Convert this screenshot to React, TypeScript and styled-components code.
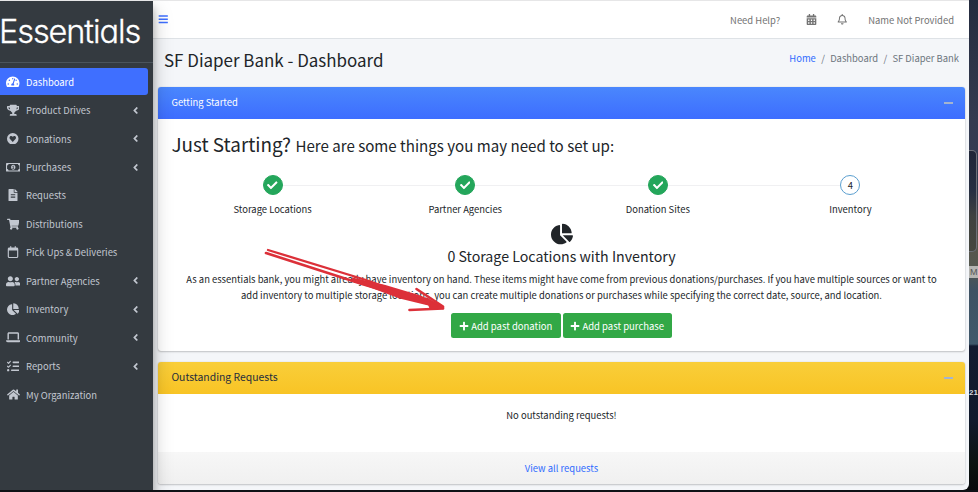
import React from "react";
import styled, { createGlobalStyle } from "styled-components";
import {
  FaTachometerAlt, FaTrophy, FaFileAlt, FaShoppingCart, FaUserFriends, FaRegMoneyBillAlt,
  FaChartPie, FaHome, FaAngleLeft, FaCalendarAlt, FaRegBell, FaPlus, FaBars, FaCheck,
} from "react-icons/fa";
import { FaListCheck, FaLaptop, FaRegCalendar } from "react-icons/fa6";

const GlobalStyle = createGlobalStyle`
  * { box-sizing: border-box; }
  body { margin: 0; overflow: hidden; background: #0d1015; }
  body, button { font-family: "Noto Sans CJK SC", "Open Sans", sans-serif; font-size: 9.43px; line-height: 16px; color: #212529; }
  h1, h2, h3, p { margin: 0; font-weight: 400; }
  a { color: #2f6bff; text-decoration: none; }
  svg { display: block; flex: none; }
`;

const Desktop = styled.div`
  position: relative;
  display: grid;
  grid-template-columns: 969px 9px;
  width: 978px;
  height: 492px;
  overflow: hidden;
  background: #0f1116;
`;

const Window = styled.div`
  display: grid;
  grid-template-columns: 153px 1fr;
  height: 490px;
  border-top: 1px solid #e6e6e7;
  border-bottom-right-radius: 6px;
  overflow: hidden;
  background: #f4f6f9;
  z-index: 1;
`;

const Sidebar = styled.aside`
  background: #343a40;
  box-shadow: 0 9px 18px rgba(0, 0, 0, 0.25), 0 6px 7px rgba(0, 0, 0, 0.22);
  z-index: 2;
`;

const Brand = styled.div`
  height: 62px;
  padding-top: 11px;
  border-bottom: 1px solid #4b545c;
  color: #fff;
  font-family: Inter, sans-serif;
  font-feature-settings: "cv11";
  font-size: 32.5px;
  line-height: 40px;
  font-weight: 300;
  letter-spacing: -1.1px;
  -webkit-text-stroke: 0.3px #fff;
  white-space: nowrap;
  margin-left: -1px;
  padding-left: 0;
`;

const Nav = styled.nav`
  display: flex;
  flex-direction: column;
  gap: 1.85px;
  padding: 5.4px 5px 0 0;
`;

const NavItem = styled.a<{ $active?: boolean }>`
  display: grid;
  grid-template-columns: 15px 1fr 10px;
  column-gap: 5.5px;
  align-items: center;
  height: 26.6px;
  padding: 0 8px 0 5.5px;
  border-radius: 0 3px 3px 0;
  color: ${(p) => (p.$active ? "#fff" : "#c2c7d0")};
  background: ${(p) => (p.$active ? "#3f6fff" : "transparent")};
  white-space: nowrap;
  & > svg { justify-self: center; }
`;

const Main = styled.main`
  display: flex;
  flex-direction: column;
  min-width: 0;
`;

const TopBar = styled.header`
  display: flex;
  align-items: center;
  height: 38px;
  padding: 0 15px 0 5px;
  background: #fff;
  border-bottom: 1px solid #dee2e6;
  color: #747474;
  & > svg:first-child { color: #3f6fff; margin-right: auto; }
`;

const HelpLink = styled.span`margin-right: 26px;`;
const UserName = styled.span`margin-left: 20.5px;`;
const BellSlot = styled.span`margin-left: 20px;`;

const TitleRow = styled.div`
  display: flex;
  justify-content: space-between;
  height: 47.5px;
  padding: 9px 10px 0 11px;
`;

const Title = styled.h1`
  font-size: 16.95px;
  line-height: 24px;
`;

const Crumbs = styled.div`
  display: flex;
  gap: 5.3px;
  padding-top: 2px;
  color: #6c757d;
`;

const Card = styled.section<{ $height: number }>`
  display: flex;
  flex-direction: column;
  height: ${(p) => p.$height}px;
  margin: 0 4px 11px 5px;
  border-radius: 3px;
  background: #fff;
  box-shadow: 0 0 1px rgba(0, 0, 0, 0.25), 0 1px 2px rgba(0, 0, 0, 0.2);
  overflow: hidden;
  flex: none;
`;

const CardHeader = styled.div<{ $tone: "blue" | "yellow" }>`
  display: flex;
  align-items: center;
  justify-content: space-between;
  height: 32px;
  padding: 0 12px 1px 13.4px;
  color: ${(p) => (p.$tone === "blue" ? "#fff" : "#1f2d3d")};
  font-size: ${(p) => (p.$tone === "blue" ? "9.43px" : "10.4px")};
  background: ${(p) =>
    p.$tone === "blue"
      ? "linear-gradient(#4a87fd, #3d6dff)"
      : "linear-gradient(#f9ce3a, #f8c425)"};
`;

const Collapse = styled.span`
  width: 9px;
  height: 2px;
  margin-top: 1px;
  background: #a4b4cf;
`;

const CardBody = styled.div`
  flex: 1;
  display: flex;
  flex-direction: column;
  align-items: center;
`;

const Lead = styled.h2`
  align-self: stretch;
  display: flex;
  align-items: baseline;
  gap: 4.5px;
  height: 44.5px;
  padding: 11px 0 0 13.5px;
  font-size: 15.1px;
  line-height: 28px;
  white-space: nowrap;
`;

const LeadStrong = styled.span`font-size: 18.9px;`;

const Steps = styled.div`
  display: grid;
  grid-template-columns: repeat(4, 192.6px);
  height: 60px;
  padding-top: 12px;
`;

const Step = styled.div`
  display: flex;
  flex-direction: column;
  align-items: center;
  gap: 6px;
`;

const StepTrack = styled.div<{ $first?: boolean; $last?: boolean }>`
  display: grid;
  grid-template-columns: 1fr 20px 1fr;
  align-items: center;
  width: 100%;
  &::before, &::after { content: ""; height: 1px; background: #f0f0f2; }
  &::before { visibility: ${(p) => (p.$first ? "hidden" : "visible")}; }
  &::after { visibility: ${(p) => (p.$last ? "hidden" : "visible")}; grid-column: 3; }
`;

const StepDot = styled.span<{ $done: boolean }>`
  grid-column: 2;
  display: flex;
  align-items: center;
  justify-content: center;
  width: 20px;
  height: 20px;
  border-radius: 50%;
  color: ${(p) => (p.$done ? "#fff" : "#212529")};
  border: 1px solid ${(p) => (p.$done ? "#24a65b" : "#5b9fd0")};
  background: ${(p) => (p.$done ? "#24a65b" : "#fff")};
`;

const Heading = styled.h3`
  font-size: 14.2px;
  line-height: 22px;
`;

const Copy = styled.p`
  margin-top: 4px;
  text-align: center;
  white-space: nowrap;
`;

const Buttons = styled.div`
  display: flex;
  gap: 2px;
  margin-top: 10px;
`;

const AddButton = styled.button`
  display: flex;
  align-items: center;
  justify-content: center;
  gap: 2px;
  width: 109.5px;
  height: 25px;
  padding: 0;
  border: 0;
  border-radius: 2.5px;
  color: #fff;
  background: #32a846;
  font-size: 9.5px;
  white-space: nowrap;
`;

const Empty = styled.p`
  height: 58px;
  padding-top: 13px;
  text-align: center;
`;

const CardFooter = styled.div`
  height: 32px;
  padding-top: 8px;
  text-align: center;
  background: linear-gradient(#f7f7f7, #f0f0f0);
`;

const Backdrop = styled.div`
  display: flex;
  flex-direction: column;
  height: 490px;
  margin-left: -6px;
  padding-left: 6px;
  background: linear-gradient(#242b3e 0, #343b50 120px, #343c52 150px, #30384c 190px, #59564c 240px, #55584f 265px, #3f5263 290px, #40596b 344px, #131b30 346px, #111a2c 420px, #0b1310 465px, #080a0c 490px);
`;

const WidgetPane = styled.div`
  height: 102px;
  width: 8px;
  margin-top: 150px;
  border: 1px solid #6d7078;
  border-left: 0;
  border-radius: 0 5px 5px 0;
  background: linear-gradient(#202638, #272f42 40%, #3f4240 65%, #45473f);
`;

const MonthTag = styled.div`
  height: 12px;
  margin-top: 14px;
  padding-left: 1px;
  background: #b5b5b2;
  color: #555;
  font: 9px/12px "Liberation Sans", sans-serif;
`;

const DayTag = styled.div`
  margin-top: 109px;
  color: #d5d8de;
  font: bold 8px/12px "Liberation Sans", sans-serif;
  white-space: nowrap;
`;

const Arrow = styled.svg`
  position: absolute;
  left: 0;
  top: 0;
  z-index: 3;
  pointer-events: none;
`;

const HeartCircle = ({ size }: { size: number }) => (
  <svg width={size} height={size} viewBox="0 0 24 24" fill="currentColor">
    <path
      fillRule="evenodd"
      d="M12 0a12 12 0 1 0 0 24a12 12 0 0 0 0-24ZM12 18.6L6.3 12.7C4.7 11 4.9 8.3 6.6 7C8.3 5.7 10.6 6.2 12 8C13.4 6.2 15.7 5.7 17.4 7C19.1 8.3 19.3 11 17.7 12.7Z"
    />
  </svg>
);

const navItems = [
  { label: "Dashboard", icon: <FaTachometerAlt size={13.5} />, active: true },
  { label: "Product Drives", icon: <FaTrophy size={12.5} />, sub: true },
  { label: "Donations", icon: <HeartCircle size={11.5} />, sub: true },
  { label: "Purchases", icon: <FaRegMoneyBillAlt size={14.5} />, sub: true },
  { label: "Requests", icon: <FaFileAlt size={12} /> },
  { label: "Distributions", icon: <FaShoppingCart size={12.5} /> },
  { label: "Pick Ups & Deliveries", icon: <FaRegCalendar size={12} /> },
  { label: "Partner Agencies", icon: <FaUserFriends size={14.5} />, sub: true },
  { label: "Inventory", icon: <FaChartPie size={12.5} />, sub: true },
  { label: "Community", icon: <FaLaptop size={14.5} />, sub: true },
  { label: "Reports", icon: <FaListCheck size={12.5} />, sub: true },
  { label: "My Organization", icon: <FaHome size={13} /> },
];

const steps = ["Storage Locations", "Partner Agencies", "Donation Sites", "Inventory"];

export default function App() {
  return (
    <Desktop>
      <GlobalStyle />
      <Window>
        <Sidebar>
          <Brand>Essentials</Brand>
          <Nav>
            {navItems.map((item) => (
              <NavItem key={item.label} $active={item.active}>
                {item.icon}
                <span>{item.label}</span>
                {item.sub && <FaAngleLeft size={11} />}
              </NavItem>
            ))}
          </Nav>
        </Sidebar>
        <Main>
          <TopBar>
            <FaBars size={10.5} />
            <HelpLink>Need Help?</HelpLink>
            <FaCalendarAlt size={11} />
            <BellSlot><FaRegBell size={10.5} /></BellSlot>
            <UserName>Name Not Provided</UserName>
          </TopBar>
          <TitleRow>
            <Title>SF Diaper Bank - Dashboard</Title>
            <Crumbs>
              <a>Home</a><span>/</span><span>Dashboard</span><span>/</span><span>SF Diaper Bank</span>
            </Crumbs>
          </TitleRow>
          <Card $height={264}>
            <CardHeader $tone="blue">Getting Started<Collapse /></CardHeader>
            <CardBody>
              <Lead>
                <LeadStrong>Just Starting?</LeadStrong>
                <span>Here are some things you may need to set up:</span>
              </Lead>
              <Steps>
                {steps.map((label, i) => (
                  <Step key={label}>
                    <StepTrack $first={i === 0} $last={i === 3}>
                      <StepDot $done={i < 3}>{i < 3 ? <FaCheck size={10.5} /> : i + 1}</StepDot>
                    </StepTrack>
                    <span>{label}</span>
                  </Step>
                ))}
              </Steps>
              <FaChartPie size={22} />
              <Heading>0 Storage Locations with Inventory</Heading>
              <Copy>
                As an essentials bank, you might already have inventory on hand. These items might have come from previous donations/purchases. If you have multiple sources or want to
                <br />
                add inventory to multiple storage locations, you can create multiple donations or purchases while specifying the correct date, source, and location.
              </Copy>
              <Buttons>
                <AddButton><FaPlus size={10} />Add past donation</AddButton>
                <AddButton><FaPlus size={10} />Add past purchase</AddButton>
              </Buttons>
            </CardBody>
          </Card>
          <Card $height={122}>
            <CardHeader $tone="yellow">Outstanding Requests<Collapse /></CardHeader>
            <Empty>No outstanding requests!</Empty>
            <CardFooter><a>View all requests</a></CardFooter>
          </Card>
        </Main>
      </Window>
      <Backdrop>
        <WidgetPane />
        <MonthTag>M</MonthTag>
        <DayTag>21</DayTag>
      </Backdrop>
      <Arrow width="978" height="492" fill="none" stroke="#dc3039" strokeLinecap="round">
        <path d="M268 250L366 280L443 307" strokeWidth="2.3" />
        <path d="M266 253L362 284L443 308" strokeWidth="2.6" />
        <path d="M352 279L385 286.5L420 297L443 307.5L400 297Z" fill="#dc3039" strokeWidth="3" />
        <path d="M416.5 289L443 306.5M443 308.5L409.5 310" strokeWidth="2.6" />
        <path d="M427 299L443 307.5L430 307Z" fill="#dc3039" strokeWidth="2" />
      </Arrow>
    </Desktop>
  );
}
